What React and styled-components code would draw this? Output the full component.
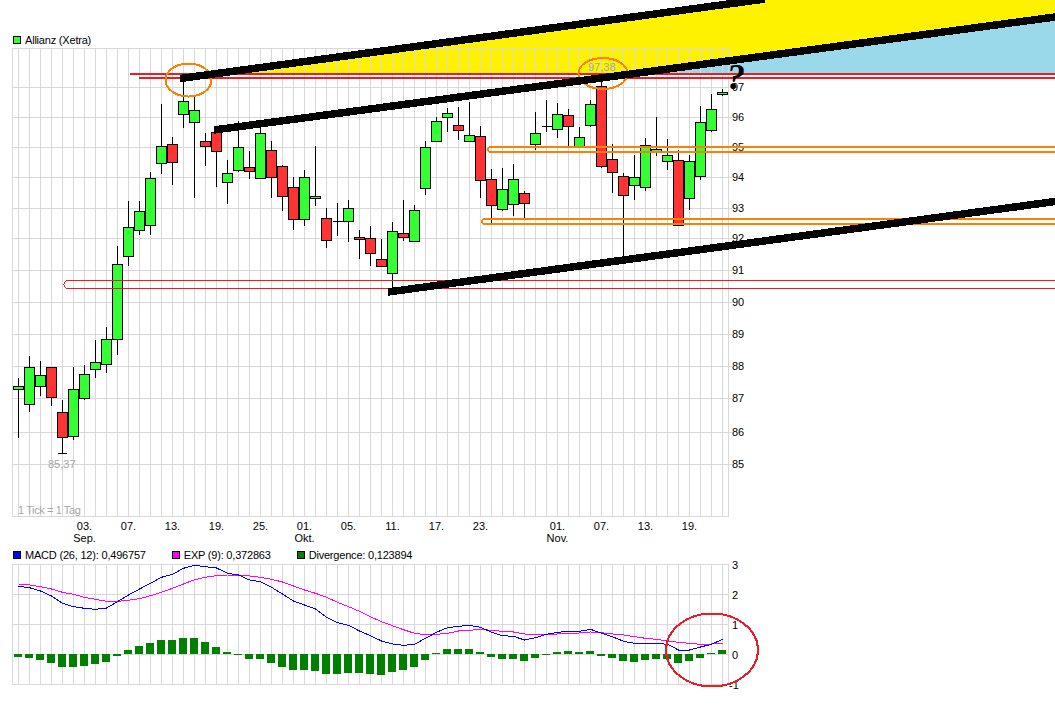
import React from 'react'
import styled, { createGlobalStyle } from 'styled-components'

const GlobalStyle = createGlobalStyle`
  html, body {
    margin: 0;
    background: #fff;
  }
  body {
    font-family: "Liberation Sans", Arial, sans-serif;
    font-size: 11px;
    color: #000;
  }
`

const Page = styled.div`
  width: 1055px;
  height: 715px;
  padding-top: 32px;
  box-sizing: border-box;
  overflow: hidden;
`

const Legend = styled.div`
  display: flex;
  align-items: center;
  gap: 26px;
  height: ${(p) => p.$height}px;
  padding-left: 13px;
`

const LegendItem = styled.div`
  display: flex;
  align-items: center;
  gap: 4px;
  white-space: nowrap;
  letter-spacing: -0.2px;
`

const Swatch = styled.span`
  width: 6px;
  height: 6px;
  border: 1px solid #000;
  background: ${(p) => p.$color};
`

const ChartSvg = styled.svg`
  display: block;
  overflow: visible;
  font-family: "Liberation Sans", Arial, sans-serif;
  font-size: 11px;
`

const GridLine = styled.line`
  stroke: #d9d9d9;
  stroke-width: 1;
  shape-rendering: crispEdges;
`

const Wick = styled.line`
  stroke: #000;
  stroke-width: 1;
  shape-rendering: crispEdges;
`

const Body = styled.rect`
  fill: ${(p) => (p.$up ? '#33ff33' : '#ff3333')};
  stroke: #000;
  stroke-width: 1;
  shape-rendering: crispEdges;
`

const DivBar = styled.rect`
  fill: #008000;
  shape-rendering: crispEdges;
`

const AxisText = styled.text`
  fill: #000;
  dominant-baseline: central;
`

const NoteText = styled.text`
  fill: #a6a6a6;
  dominant-baseline: central;
  letter-spacing: ${(p) => p.$spacing || 0}px;
`

const Trend = styled.line`
  stroke: #000;
  stroke-width: 7.5;
  shape-rendering: crispEdges;
`

const Zone = styled.polygon`
  fill: ${(p) => p.$color};
  shape-rendering: crispEdges;
`

const Level = styled.line`
  stroke: #ed1c24;
  stroke-width: 2;
  shape-rendering: crispEdges;
`

const Channel = styled.path`
  fill: none;
  stroke: ${(p) => p.$color};
  stroke-width: ${(p) => p.$width};
  shape-rendering: crispEdges;
`

const Ring = styled.ellipse`
  fill: none;
  stroke: ${(p) => p.$color};
  stroke-width: 2;
  shape-rendering: crispEdges;
`

const MacdLine = styled.polyline`
  fill: none;
  stroke: ${(p) => p.$color};
  stroke-width: 1;
  shape-rendering: crispEdges;
`

const Question = styled.text`
  font-family: "Liberation Serif", "Times New Roman", serif;
  font-weight: bold;
  font-style: italic;
  font-size: 36px;
  fill: #000;
`

// bodyTop, bodyBottom, wickTop, wickBottom, up (pixel rows, one candle every 11px)
const candles = [
  [386, 389, 378, 438, 1], [367, 404, 356, 412, 1], [375, 386, 361, 396, 1], [367, 397, 367, 406, 0],
  [412, 437, 400, 453, 0], [389, 436, 367, 440, 1], [374, 398, 365, 400, 1], [362, 369, 340, 378, 1],
  [339, 364, 327, 373, 1], [264, 339, 246, 355, 1], [227, 256, 201, 266, 1], [211, 230, 201, 235, 1],
  [178, 225, 172, 235, 1], [146, 163, 104, 174, 1], [144, 162, 137, 185, 0], [101, 114, 81, 128, 1],
  [110, 122, 96, 198, 1], [141, 146, 133, 166, 0], [132, 151, 128, 187, 0], [173, 182, 160, 204, 1],
  [147, 170, 121, 172, 1], [167, 171, 151, 179, 0], [133, 178, 125, 178, 1], [150, 177, 141, 198, 0],
  [166, 196, 165, 211, 0], [187, 219, 177, 230, 0], [177, 219, 170, 226, 1], [196, 198, 146, 206, 1],
  [218, 240, 208, 248, 0], [221, 221, 203, 236, 1], [208, 221, 200, 242, 1], [237, 239, 230, 259, 0],
  [238, 253, 226, 266, 0], [259, 266, 239, 266, 0], [231, 273, 222, 288, 1], [233, 237, 200, 241, 0],
  [210, 241, 205, 241, 1], [147, 188, 141, 195, 1], [121, 141, 117, 142, 1], [113, 117, 108, 132, 1],
  [125, 130, 107, 140, 0], [135, 141, 102, 141, 1], [136, 180, 126, 198, 0], [179, 205, 169, 225, 0],
  [189, 209, 168, 211, 1], [179, 204, 164, 216, 1], [193, 203, 191, 218, 0], [133, 144, 112, 150, 1],
  [126, 126, 100, 132, 1], [114, 129, 103, 138, 1], [115, 126, 109, 146, 0], [137, 147, 127, 147, 1],
  [104, 125, 100, 127, 1], [86, 166, 82, 168, 0], [159, 172, 144, 193, 0], [176, 195, 173, 258, 0],
  [177, 185, 155, 200, 1], [145, 187, 138, 191, 1], [149, 151, 117, 156, 1], [155, 161, 139, 170, 1],
  [160, 225, 150, 225, 0], [161, 198, 155, 210, 1], [122, 176, 106, 180, 1], [109, 130, 94, 132, 1],
  [92, 94, 89, 96, 1],
]

const slotX = (i) => 18.5 + 11 * i

const priceRows = [
  [97, 87], [96, 117], [95, 147], [94, 177], [93, 208], [92, 238], [91, 270],
  [90, 302], [89, 334], [88, 366], [87, 398], [86, 432], [85, 464],
]

const dateTicks = [
  ['03.', 6, 'Sep.'], ['07.', 10], ['13.', 14], ['19.', 18], ['25.', 22], ['01.', 26, 'Okt.'], ['05.', 30],
  ['11.', 34], ['17.', 38], ['23.', 42], ['01.', 49, 'Nov.'], ['07.', 53], ['13.', 57], ['19.', 61],
]

// measured on a 3x crop of the panel, so y = 540 + v / 3
const toMacdY = (v) => 540 + v / 3

const macd = [
  139, 143, 153, 168, 190, 200, 205, 208, 204, 185, 165, 147, 130, 112, 103, 85, 76, 80, 84, 100, 105, 120, 125,
  142, 162, 183, 195, 207, 232, 248, 256, 273, 287, 303, 312, 316, 313, 295, 277, 263, 259, 256, 262, 277, 287,
  289, 300, 293, 283, 277, 274, 274, 268, 280, 290, 304, 310, 310, 310, 313, 330, 330, 321, 313, 298,
]

const signal = [
  132, 135, 140, 147, 157, 163, 172, 178, 184, 184, 181, 176, 167, 157, 145, 132, 119, 112, 107, 105, 105, 108, 112,
  118, 126, 138, 150, 160, 172, 187, 200, 214, 230, 245, 257, 269, 280, 284, 283, 280, 273, 271, 268, 271, 274,
  276, 282, 283, 284, 282, 280, 279, 276, 278, 282, 285, 290, 295, 298, 303, 307, 310, 313, 312, 310,
]

const divergence = [
  351, 354, 360, 369, 381, 381, 378, 372, 366, 348, 330, 318, 309, 300, 300, 294, 294, 306, 321, 336, 345, 357, 357,
  369, 381, 390, 390, 393, 402, 402, 399, 399, 402, 405, 396, 390, 381, 360, 339, 327, 327, 327, 336, 351, 357,
  357, 363, 354, 345, 336, 333, 336, 333, 348, 354, 363, 366, 360, 357, 357, 369, 363, 354, 339, 330,
]

const toPoints = (list) => list.map((v, i) => `${slotX(i)},${toMacdY(v).toFixed(1)}`).join(' ')

const VerticalGrid = ({ top, bottom }) => (
  <>
    <GridLine x1="12.5" x2="12.5" y1={top} y2={bottom} />
    {candles.map((_, i) => (
      <GridLine key={i} x1={slotX(i)} x2={slotX(i)} y1={top} y2={bottom} />
    ))}
    <GridLine x1="728.5" x2="728.5" y1={top} y2={bottom} />
  </>
)

const Candle = ({ index, data }) => {
  const [bodyTop, bodyBottom, wickTop, wickBottom, up] = data
  const x = slotX(index)
  return (
    <g>
      <Wick x1={x} x2={x} y1={wickTop} y2={wickBottom} />
      {bodyTop === bodyBottom ? (
        <Wick x1={x - 5} x2={x + 5} y1={bodyTop + 0.5} y2={bodyTop + 0.5} />
      ) : (
        <Body $up={up} x={x - 5} y={bodyTop + 0.5} width="10" height={bodyBottom - bodyTop} />
      )}
    </g>
  )
}

const PriceChart = () => (
  <ChartSvg width="1055" height="497" viewBox="0 48 1055 497">
    <Zone $color="#fff200" points="220,73 765,0 1055,0 1055,17 638,73" />
    <Zone $color="#99d9ea" points="638,73 1055,17 1055,73" />

    <GridLine x1="12" x2="729" y1="48.5" y2="48.5" />
    <GridLine x1="12" x2="729" y1="516.5" y2="516.5" />
    {priceRows.map(([label, y]) => (
      <GridLine key={label} x1="12" x2="732" y1={y + 0.5} y2={y + 0.5} />
    ))}
    <VerticalGrid top="48" bottom="517" />

    {candles.map((data, i) => (
      <Candle key={i} index={i} data={data} />
    ))}
    <Wick x1="58" x2="67" y1="453.5" y2="453.5" />

    {priceRows.map(([label, y]) => (
      <AxisText key={label} x="732" y={y}>{label}</AxisText>
    ))}
    {dateTicks.map(([label, slot, month]) => (
      <g key={slot}>
        <AxisText x={slotX(slot)} y="526" textAnchor="middle">{label}</AxisText>
        {month && <AxisText x={slotX(slot)} y="538" textAnchor="middle">{month}</AxisText>}
      </g>
    ))}
    <NoteText x="48" y="464">85,37</NoteText>
    <NoteText x="18" y="510" $spacing={-0.4}>1 Tick = 1 Tag</NoteText>
    <NoteText x="588" y="67">97,38</NoteText>

    <Level x1="130" x2="1055" y1="74" y2="74" />
    <Level x1="139" x2="1055" y1="78" y2="78" />
    <Channel $color="#ed1c24" $width={1} d="M1055 280.5H68A4 4 0 0 0 68 288.5H1055" />
    <Channel $color="#ff8000" $width={2} d="M1055 147H491Q488 147 488 149.5Q488 152 491 152H1055" />
    <Channel $color="#ff8000" $width={2} d="M1055 219H485Q482 219 482 221.5Q482 224 485 224H1055" />
    <Ring $color="#ff8000" cx="188.5" cy="80" rx="23" ry="16.5" />
    <Ring $color="#ff8000" cx="603" cy="73.5" rx="24.5" ry="15.5" />

    <Trend x1="180" y1="78.5" x2="765" y2="-1" />
    <Trend x1="214" y1="130" x2="1055" y2="17" />
    <Trend x1="388" y1="292" x2="1055" y2="201.5" />
    <Question x="727" y="89">?</Question>
  </ChartSvg>
)

const MacdChart = () => (
  <ChartSvg width="1055" height="130" viewBox="0 564 1055 130">
    <GridLine x1="12" x2="729" y1="564.5" y2="564.5" />
    <GridLine x1="12" x2="729" y1="594.5" y2="594.5" />
    <GridLine x1="12" x2="729" y1="624.5" y2="624.5" />
    <GridLine x1="12" x2="729" y1="654.5" y2="654.5" />
    <GridLine x1="12" x2="729" y1="684.5" y2="684.5" />
    <VerticalGrid top="564" bottom="685" />

    {divergence.map((v, i) => {
      const y = toMacdY(v)
      return (
        <DivBar
          key={i}
          x={slotX(i) - 4.5}
          y={Math.round(Math.min(y, 654))}
          width="8"
          height={Math.max(1, Math.round(Math.abs(y - 654)))}
        />
      )
    })}

    <MacdLine $color="#ff00ff" points={toPoints(signal)} />
    <MacdLine $color="#0000ff" points={toPoints(macd)} />

    <AxisText x="732" y="565">3</AxisText>
    <AxisText x="732" y="595">2</AxisText>
    <AxisText x="732" y="625">1</AxisText>
    <AxisText x="732" y="655">0</AxisText>
    <AxisText x="729" y="685">-1</AxisText>

    <Ring $color="#ed1c24" cx="712" cy="650" rx="46" ry="36.5" />
  </ChartSvg>
)

const App = () => (
  <>
    <GlobalStyle />
    <Page>
      <Legend $height={16}>
        <LegendItem>
          <Swatch $color="#33ff33" />
          Allianz (Xetra)
        </LegendItem>
      </Legend>
      <PriceChart />
      <Legend $height={19}>
        <LegendItem>
          <Swatch $color="#0000ff" />
          MACD (26, 12): 0,496757
        </LegendItem>
        <LegendItem>
          <Swatch $color="#ff00ff" />
          EXP (9): 0,372863
        </LegendItem>
        <LegendItem>
          <Swatch $color="#008000" />
          Divergence: 0,123894
        </LegendItem>
      </Legend>
      <MacdChart />
    </Page>
  </>
)

export default App
